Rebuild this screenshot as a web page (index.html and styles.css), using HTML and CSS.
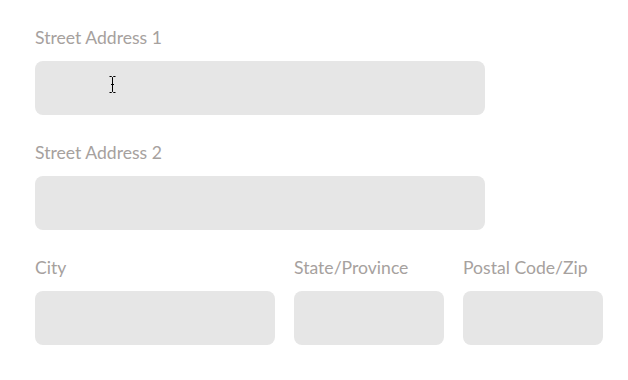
FILE: index.html
```html
<!DOCTYPE html>
<html>
<head>
<meta charset="utf-8">
<link rel="stylesheet" href="styles.css">
</head>
<body>
<form class="form">
  <div class="field">
    <label class="label">Street Address 1</label>
    <div class="input wide"></div>
  </div>
  <div class="field">
    <label class="label">Street Address 2</label>
    <div class="input wide"></div>
  </div>
  <div class="row">
    <div class="field city">
      <label class="label">City</label>
      <div class="input"></div>
    </div>
    <div class="field state">
      <label class="label">State/Province</label>
      <div class="input"></div>
    </div>
    <div class="field postal">
      <label class="label">Postal Code/Zip</label>
      <div class="input"></div>
    </div>
  </div>
</form>
<svg class="cursor" width="7" height="17" viewBox="0 0 7 17">
  <path d="M0.5 0.5h2l1 1 1-1h2M3.5 1.5v14M0.5 16.5h2l1-1 1 1h2M2 8.5h3" fill="none" stroke="#000" stroke-width="1"/>
</svg>
</body>
</html>
```
FILE: styles.css
```css
html, body {
  margin: 0;
  padding: 0;
  background: #ffffff;
}
body {
  font-family: Lato, "Open Sans", sans-serif;
}
.form {
  padding: 27px 0 0 35px;
  display: flex;
  flex-direction: column;
  gap: 27px;
}
.field {
  display: flex;
  flex-direction: column;
}
.label {
  font-size: 17.6px;
  line-height: 22px;
  color: #a6a19e;
  margin-bottom: 12px;
}
.input {
  height: 54px;
  background: #e6e6e6;
  border-radius: 8px;
}
.wide {
  width: 450px;
}
.row {
  display: flex;
  gap: 19px;
}
.city { width: 240px; }
.state { width: 150px; }
.postal { width: 140px; }
.cursor {
  position: absolute;
  left: 109px;
  top: 76px;
}
```
